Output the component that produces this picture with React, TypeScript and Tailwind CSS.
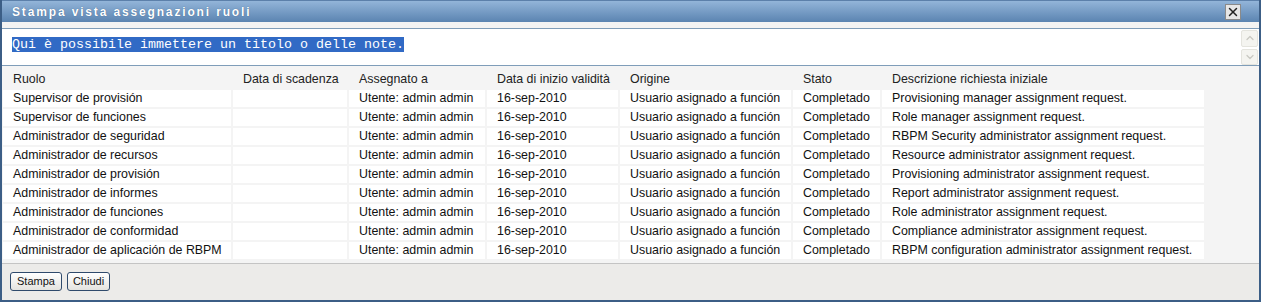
import { X, ChevronUp, ChevronDown } from 'lucide-react';

const rows = [
  ['Supervisor de provisión', 'Provisioning manager assignment request.'],
  ['Supervisor de funciones', 'Role manager assignment request.'],
  ['Administrador de seguridad', 'RBPM Security administrator assignment request.'],
  ['Administrador de recursos', 'Resource administrator assignment request.'],
  ['Administrador de provisión', 'Provisioning administrator assignment request.'],
  ['Administrador de informes', 'Report administrator assignment request.'],
  ['Administrador de funciones', 'Role administrator assignment request.'],
  ['Administrador de conformidad', 'Compliance administrator assignment request.'],
  ['Administrador de aplicación de RBPM', 'RBPM configuration administrator assignment request.'],
];

const headers = [
  'Ruolo',
  'Data di scadenza',
  'Assegnato a',
  'Data di inizio validità',
  'Origine',
  'Stato',
  'Descrizione richiesta iniziale',
];

const cols = 'grid grid-cols-[228px_114px_136px_131px_171px_87px_322px] gap-x-[2px]';

export default function App() {
  return (
    <div className="w-[1261px] h-[302px] flex flex-col border-2 border-t-0 border-[#3c5e86] bg-[#f4f4f4] font-['Liberation_Sans',Arial,sans-serif] overflow-hidden">
      {/* Title bar */}
      <div className="h-[22px] flex items-center justify-between pl-[10px] pr-[18px] bg-gradient-to-b from-[#93b5d9] to-[#5b84b1] border-t border-[#5c80aa]">
        <span className="text-white text-[12px] font-bold tracking-[1.85px] [text-shadow:0_0_1px_#3a5f88]">
          Stampa vista assegnazioni ruoli
        </span>
        <button className="w-[16px] h-[16px] flex items-center justify-center bg-[#e6e6e6] border border-[#8a8a8a]">
          <X size={14} strokeWidth={2.5} className="text-[#222]" />
        </button>
      </div>

      {/* Notes area */}
      <div className="h-[6px] bg-[#f3f3f3]" />
      <div className="h-[38px] flex bg-white border-y border-[#7f9db9]">
        <div className="flex-1 pl-[10px] pt-[2px]">
          <span className="bg-[#316ac5] text-white font-['Liberation_Mono','Courier_New',monospace] text-[13.33px] leading-[15px]">
            Qui è possibile immettere un titolo o delle note.
          </span>
        </div>
        <div className="w-[17px] mr-[1px] flex flex-col gap-[2px] pt-[1px]">
          <div className="h-[17px] flex items-center justify-center bg-[#f4f4f0] border border-[#e4e4de] rounded-[2px]">
            <ChevronUp size={12} strokeWidth={2.5} className="text-[#c8c8c2]" />
          </div>
          <div className="h-[17px] flex items-center justify-center bg-[#f4f4f0] border border-[#e4e4de] rounded-[2px]">
            <ChevronDown size={12} strokeWidth={2.5} className="text-[#c8c8c2]" />
          </div>
        </div>
      </div>

      {/* Table */}
      <div className="flex-1 pl-[1px] pt-[4px] text-[12.4px] text-[#111]">
        <div className={`${cols} h-[17px] items-center text-[#222]`}>
          {headers.map((h) => (
            <div key={h} className="pl-[10px] whitespace-nowrap">
              {h}
            </div>
          ))}
        </div>
        <div className="flex flex-col gap-y-[2px] mt-[3px]">
          {rows.map(([role, desc]) => (
            <div key={role} className={`${cols} h-[17px]`}>
              {[role, '', 'Utente: admin admin', '16-sep-2010', 'Usuario asignado a función', 'Completado', desc].map(
                (c, i) => (
                  <div key={i} className="bg-white pl-[10px] leading-[17px] whitespace-nowrap">
                    {c}
                  </div>
                )
              )}
            </div>
          ))}
        </div>
      </div>

      {/* Footer */}
      <div className="h-[37px] flex items-center gap-[5px] pl-[8px] pb-[1px] bg-[#ecebe9] border-t border-[#c4c4c4]">
        <button className="h-[19px] px-[6px] text-[11px] text-[#111] rounded-[3px] border border-[#2f4a6c] bg-gradient-to-b from-white to-[#e4e3df]">
          Stampa
        </button>
        <button className="h-[19px] px-[5px] text-[11px] text-[#111] rounded-[3px] border border-[#2f4a6c] bg-gradient-to-b from-white to-[#e4e3df]">
          Chiudi
        </button>
      </div>
    </div>
  );
}
